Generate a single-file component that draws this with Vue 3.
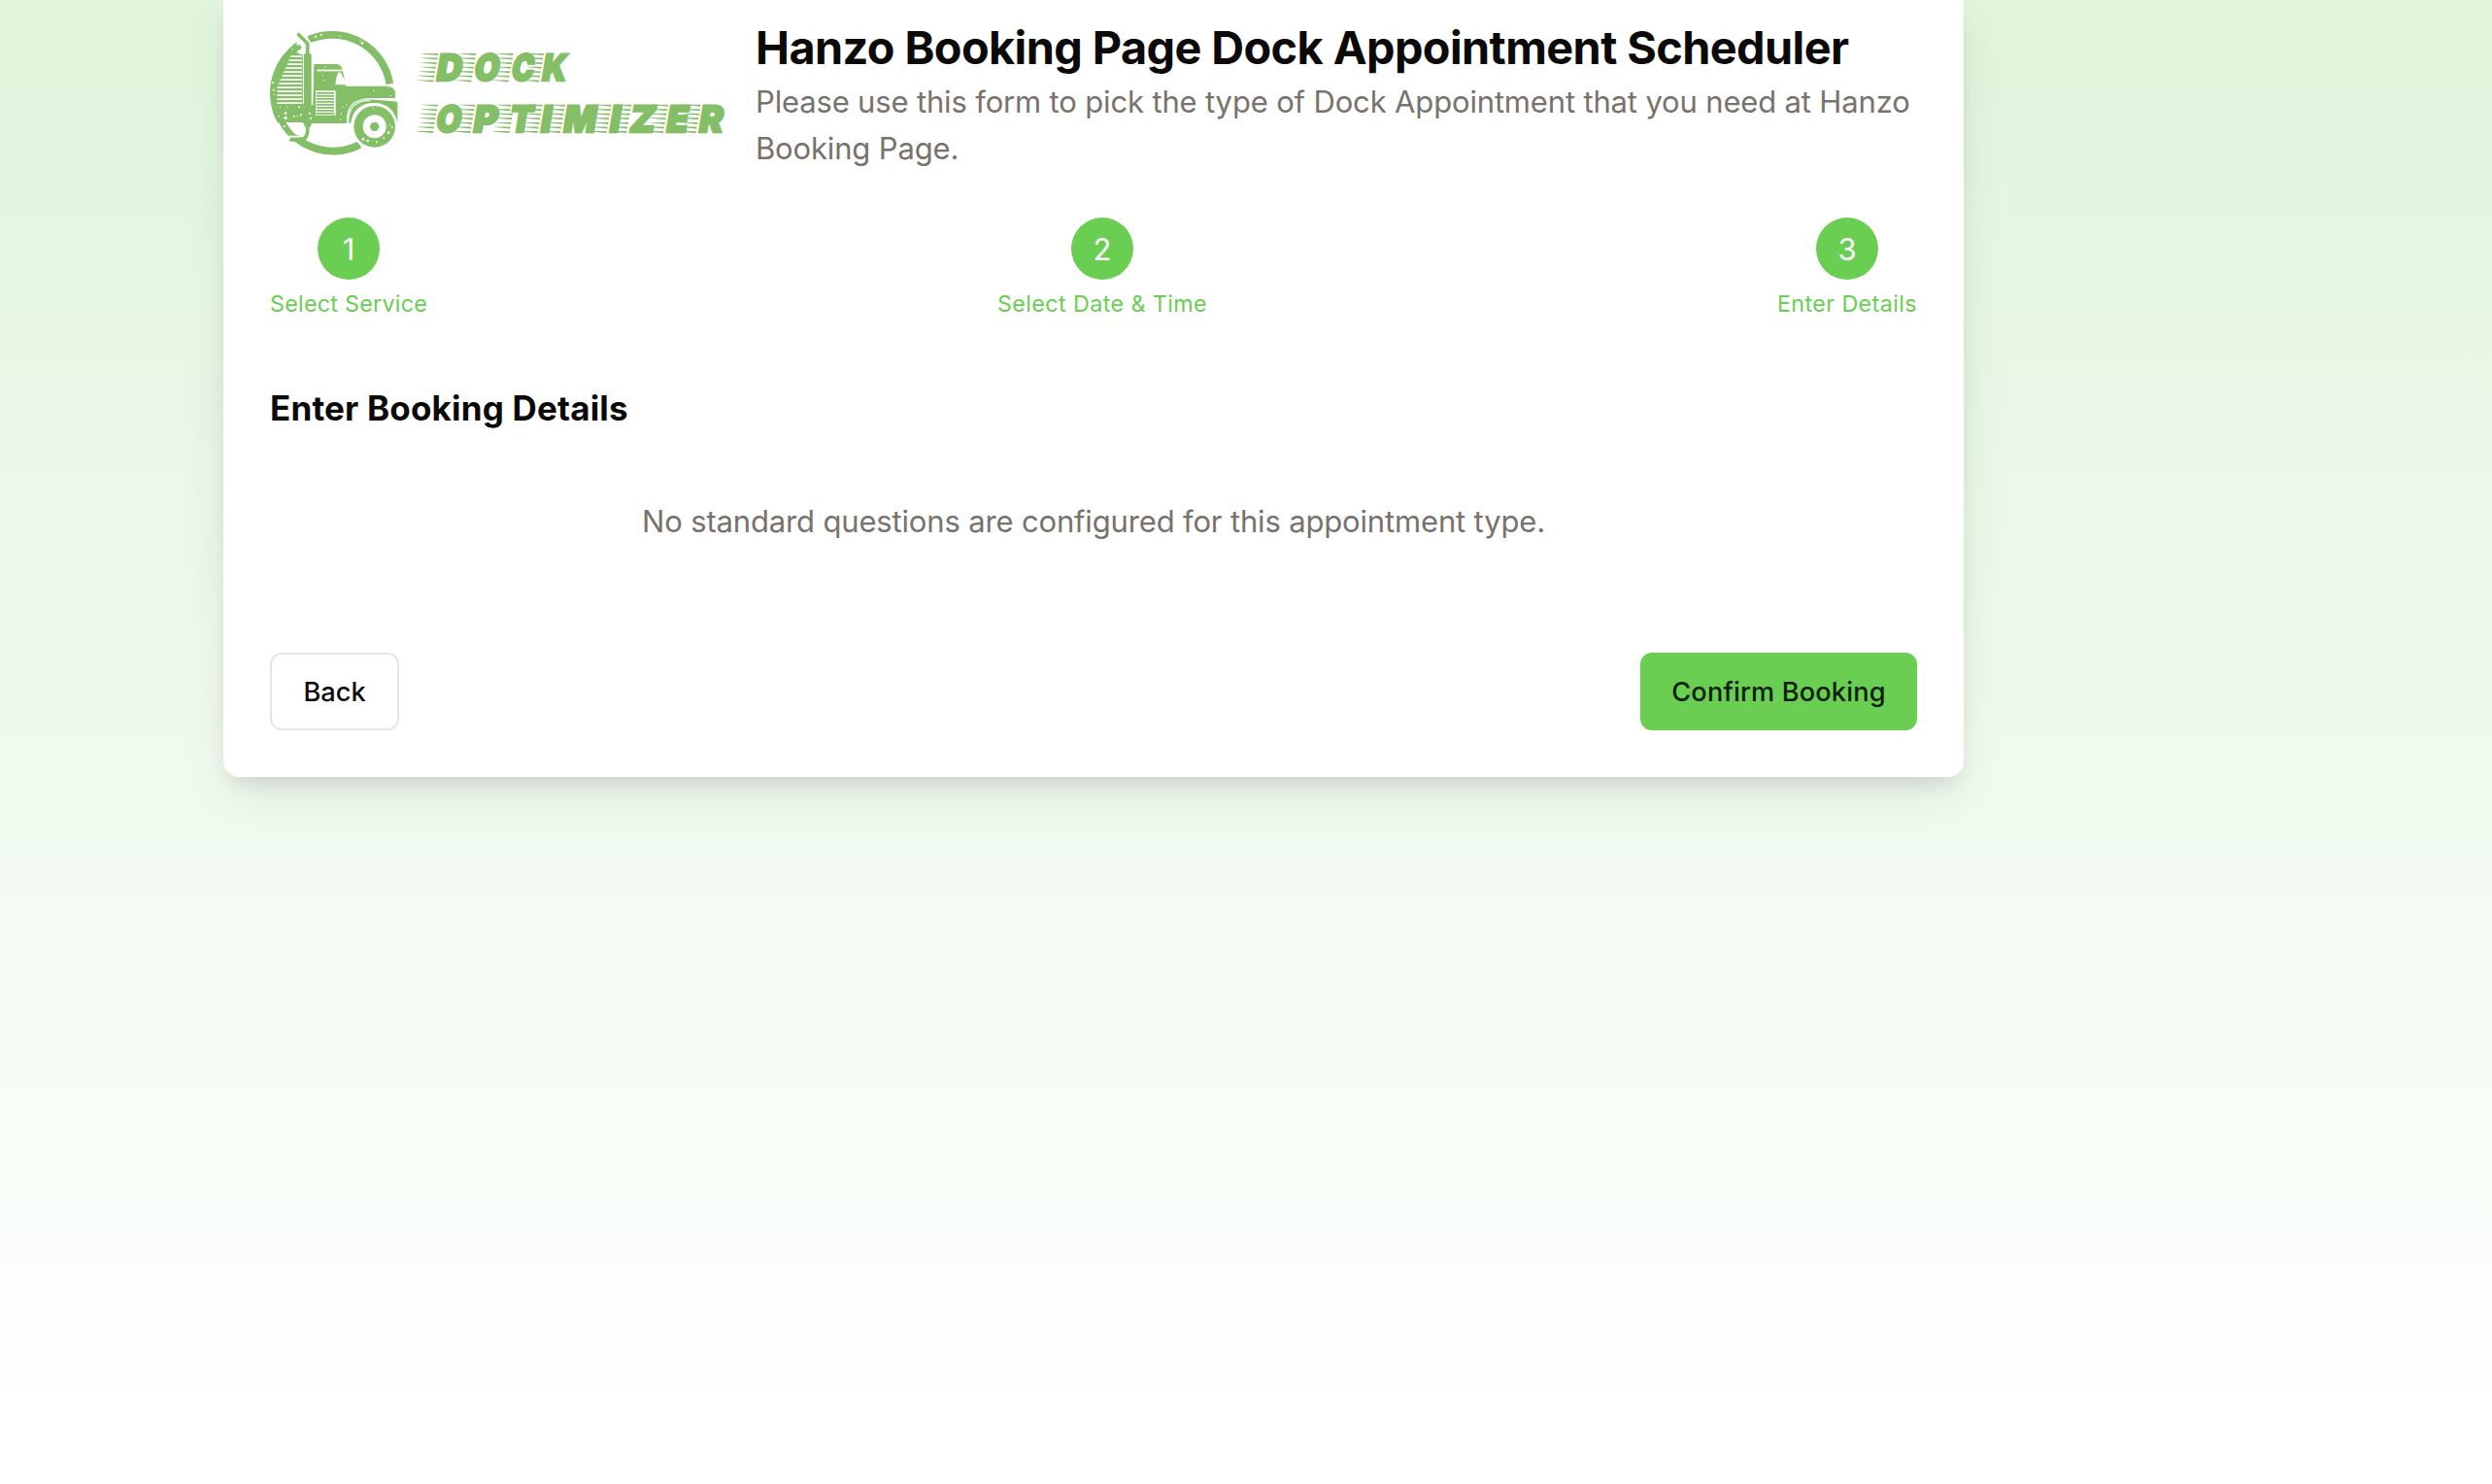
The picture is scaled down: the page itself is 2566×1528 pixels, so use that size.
<script setup>
const steps = [
  { n: 1, label: 'Select Service', cls: 'service' },
  { n: 2, label: 'Select Date & Time', cls: 'date' },
  { n: 3, label: 'Enter Details', cls: 'details' },
]

// Wordmark letters: left edge at the baseline, width, baseline
const letters = [
  ['D', 550, 76, 192], ['O', 667, 74, 192], ['C', 782, 66, 192], ['K', 876, 72, 192],
  ['O', 549, 74, 350], ['P', 664, 72, 350], ['T', 775, 70, 350], ['I', 872, 30, 350],
  ['M', 942, 98, 350], ['I', 1085, 30, 350], ['Z', 1147, 76, 350], ['E', 1260, 64, 350],
  ['R', 1361, 71, 350],
].map(([ch, x, w, y]) => ({ ch, x, w, y }))

// Tapered speed lines trailing every letter
const starts = [54, 54, 56, 52, 52, 54, 56]
const streaks = letters.flatMap((l) =>
  starts.map((len, i) => {
    const y = l.y - 87 + i * 13.7
    const stem = l.ch === 'T' && i > 1 ? 10 : 0
    const right = l.x + 9 - i * 2.4 + stem
    const left = right - len
    return `M${left} ${y}H${right}l-1 6L${left + 12} ${y + 2}Z`
  }),
).join('')

const louvres = Array.from({ length: 13 }, (_, i) => {
  const y = 112 + i * 12
  const x = Math.max(62, 104 - i * 5.2)
  return `M${x} ${y}H138v5H${x - 2}Z`
}).join('')

const grille = Array.from({ length: 8 }, (_, i) => `M182 ${225 + i * 9}H237v5H182Z`).join('')
</script>

<template>
  <div class="page">
    <main class="card">
      <header class="head">
        <svg class="logo" viewBox="39 27 1470 396" role="img" aria-label="Dock Optimizer">
          <defs>
            <clipPath id="disc"><circle cx="231" cy="228" r="192" /></clipPath>
          </defs>
          <g fill="#84bf68">
            <!-- ring -->
            <path d="M159 62.5A180.5 180.5 0 0 1 409 199M316 387A180.5 180.5 0 0 1 131 78" fill="none" stroke="#84bf68" stroke-width="23" />
            <path d="M39 108H145V318H39Z" clip-path="url(#disc)" />
            <path d="M105 108L118 99L133 108Z" />
            <path d="M88 318H144V330Q144 345 134 358H122Q104 345 88 318Z" fill="#fff" />
            <path :d="louvres" fill="#fff" />
            <!-- chassis, cab and hood -->
            <path d="M140 265H292V321H140Z" />
            <path d="M175 138H245Q262 140 262 157L265 165L270 188L258 165L250 163Q242 180 241 202H273V206H400Q426 208 426 230V243L350 243Q290 245 280 321H168L172 260Z" />
            <path d="M184 155H262V160H184Z" fill="#fff" />
            <path d="M180 220H242V296H180Z" fill="#fff" />
            <path :d="grille" />
            <path d="M278 321C275 268 295 247 350 245L435 252V322H428C424 282 398 260 362 260C322 260 294 282 291 322Z" stroke="#fff" stroke-width="4" />
            <path d="M280 322C280 270 305 250 350 250" fill="none" stroke="#fff" stroke-width="4" />
            <path d="M432 322H280V330H432Z" fill="#fff" />
            <path d="M292 330C292 290 320 261 362 261S428 290 428 330Z" fill="#fff" />
            <!-- wheel -->
            <circle cx="362" cy="331" r="72" fill="#fff" />
            <circle cx="362" cy="331" r="64" />
            <circle cx="362" cy="331" r="36" fill="#fff" />
            <circle cx="362" cy="331" r="14" />
            <!-- exhaust stack -->
            <path d="M127 46L155 75V112" fill="none" stroke="#fff" stroke-width="22" />
            <path d="M128 47L155 75V112M155 325V345Q153 372 132 372H104" fill="none" stroke="#84bf68" stroke-width="11" stroke-linecap="round" />
            <path d="M96 362H128Q144 360 147 345" fill="none" stroke="#fff" stroke-width="5" />
            <path d="M168 112V255" stroke="#fff" stroke-width="5" />
            <path d="M142 108V262" stroke="#fff" stroke-width="3" />
            <path d="M148 105H163Q167 107 167 112V324Q166 333 155 335Q145 333 144 324V112Q144 107 148 105Z" />
            <!-- worn print specks -->
            <g fill="#fff">
              <ellipse cx="180" cy="53" rx="4" ry="3" /><ellipse cx="197" cy="48" rx="3" ry="4" />
              <circle cx="257" cy="52" r="2" /><circle cx="318" cy="64" r="2" /><circle cx="324" cy="73" r="4" />
              <ellipse cx="125" cy="75" rx="4" ry="6" /><circle cx="108" cy="92" r="2" />
              <circle cx="48" cy="195" r="3" /><circle cx="50" cy="218" r="3" /><circle cx="52" cy="232" r="2" />
              <circle cx="87" cy="304" r="5" /><circle cx="87" cy="290" r="4" /><circle cx="66" cy="299" r="2" />
              <circle cx="70" cy="271" r="2" /><circle cx="93" cy="271" r="2" /><circle cx="129" cy="271" r="3" />
              <circle cx="114" cy="299" r="3" /><circle cx="124" cy="299" r="2" /><circle cx="135" cy="295" r="3" />
              <circle cx="83" cy="330" r="3" /><circle cx="162" cy="290" r="3" /><circle cx="165" cy="305" r="3" />
              <circle cx="210" cy="146" r="2" /><circle cx="202" cy="172" r="2" /><circle cx="208" cy="188" r="2" />
              <circle cx="359" cy="220" r="2" /><circle cx="405" cy="211" r="2" /><circle cx="411" cy="236" r="2" />
              <circle cx="264" cy="271" r="2" /><circle cx="276" cy="263" r="2" /><circle cx="260" cy="291" r="2" /><circle cx="257" cy="309" r="2" />
              <circle cx="358" cy="274" r="2" /><circle cx="327" cy="370" r="4" /><circle cx="341" cy="375" r="4" />
              <circle cx="369" cy="379" r="3" /><circle cx="391" cy="366" r="3" /><circle cx="405" cy="350" r="4" />
              <circle cx="416" cy="332" r="3" /><circle cx="409" cy="324" r="2" />
            </g>
            <!-- wordmark -->
            <path :d="streaks" />
            <g class="wordmark">
              <text
                v-for="(l, i) in letters"
                :key="i"
                :transform="`translate(${l.x - 1} ${l.y - 3}) skewX(-9.5)`"
                :textLength="l.w + 3"
                lengthAdjust="spacingAndGlyphs"
              >{{ l.ch }}</text>
            </g>
          </g>
        </svg>
        <div class="intro">
          <h1>Hanzo Booking Page Dock Appointment Scheduler</h1>
          <p><span>Please use this form to pick the type of Dock Appointment that you need at Hanzo</span> <span>Booking Page.</span></p>
        </div>
      </header>

      <ol class="steps">
        <li v-for="s in steps" :key="s.n">
          <span class="dot">{{ s.n }}</span>
          <span class="label" :class="s.cls">{{ s.label }}</span>
        </li>
      </ol>

      <h2>Enter Booking Details</h2>
      <p class="empty">No standard questions are configured for this appointment type.</p>

      <footer class="actions">
        <button class="btn back" type="button">Back</button>
        <button class="btn confirm" type="button">Confirm Booking</button>
      </footer>
    </main>
  </div>
</template>

<style>
body {
  margin: 0;
  overflow: hidden;
}
</style>

<style scoped>
.page {
  box-sizing: border-box;
  height: 1528px;
  padding-left: 230px;
  background: linear-gradient(to bottom, #e0f5dc 0, #fff 1500px);
  font-family: Inter, "Liberation Sans", sans-serif;
  color: #0c0a09;
}
.card {
  box-sizing: border-box;
  width: 1792px;
  height: 800px;
  padding: 0 48px;
  background: #fff;
  border-radius: 0 0 16px 16px;
  box-shadow: 0 20px 50px -6px rgb(0 0 0 / 0.1), 0 12px 20px -8px rgb(0 0 0 / 0.1);
}
.head {
  display: flex;
  align-items: flex-start;
  gap: 10px;
  height: 224px;
}
.logo {
  flex: none;
  width: 490px;
  height: 132px;
  margin-top: 29px;
}
.wordmark {
  font: 900 113px Inter, "Liberation Sans", sans-serif;
  stroke: #84bf68;
  stroke-width: 7px;
}
.intro {
  padding-top: 25px;
  white-space: nowrap;
}
h1, h2, p, ol {
  margin: 0;
  padding: 0;
}
h1 {
  font-size: 46.8px;
  line-height: 48px;
  font-weight: 700;
  letter-spacing: -0.58px;
}
p {
  font-size: 31px;
  line-height: 48px;
  letter-spacing: -0.16px;
  color: #78716c;
}
.intro p {
  padding-top: 8px;
}
.intro p span {
  display: block;
}
.steps {
  display: flex;
  justify-content: space-between;
  height: 172px;
  list-style: none;
  color: #69ce51;
}
.steps li {
  display: flex;
  flex-direction: column;
  align-items: center;
}
.dot {
  width: 64px;
  height: 64px;
  border-radius: 50%;
  background: #69ce51;
  color: #fff;
  font-size: 31px;
  line-height: 65px;
  text-align: center;
}
.label {
  margin-top: 9px;
  font-size: 23.3px;
  line-height: 32px;
  letter-spacing: 0.4px;
  white-space: nowrap;
}
.service {
  letter-spacing: 0.25px;
}
h2 {
  font-size: 35px;
  line-height: 48px;
  font-weight: 700;
  letter-spacing: 0.18px;
}
.empty {
  margin-top: 69px;
  text-align: center;
}
.actions {
  display: flex;
  justify-content: space-between;
  margin-top: 111px;
}
.btn {
  box-sizing: border-box;
  height: 80px;
  padding: 0;
  border: 0;
  border-radius: 12px;
  font: 500 27.2px/81px Inter, "Liberation Sans", sans-serif;
  text-align: center;
}
.back {
  width: 133px;
  border: 2px solid #e5e5e5;
  background: #fff;
  color: #0c0a09;
  line-height: 77px;
}
.confirm {
  width: 285px;
  background: #69ce51;
  color: #0b1f08;
  letter-spacing: 0.15px;
}
</style>
